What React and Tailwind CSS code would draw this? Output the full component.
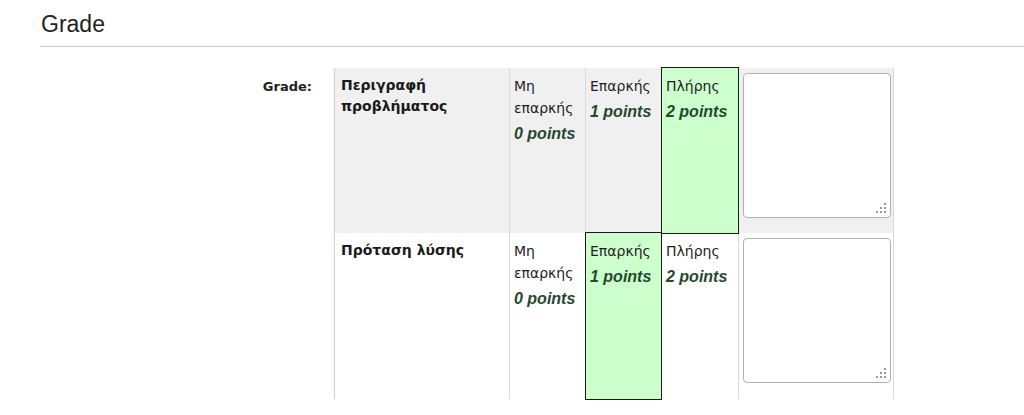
import React from "react";

const font = { fontFamily: '"Liberation Sans", Arial, sans-serif' };
const dv = { fontFamily: '"DejaVu Sans", Verdana, sans-serif' };

function Grip() {
  return (
    <svg className="absolute right-[3px] bottom-[3px]" width="12" height="12" viewBox="0 0 12 12">
      {[
        [9, 1],
        [5, 5],
        [9, 5],
        [1, 9],
        [5, 9],
        [9, 9],
      ].map(([x, y], i) => (
        <rect key={i} x={x} y={y} width="2" height="2" fill="#9a9a9a" />
      ))}
    </svg>
  );
}

function Level({ def, pts, selected, bg }) {
  return (
    <div
      className={
        "relative px-[4px] pt-[7px] " +
        (selected
          ? "bg-[#ccffcc] border border-[#1a1a1a] -ml-px -my-px z-10"
          : bg + " border-r border-[#d9d9d9]")
      }
    >
      <div className="text-[14px] leading-[22px] text-[#1e1e1e] whitespace-nowrap" style={dv}>{def}</div>
      <div className="text-[16px] leading-[22px] mt-[4px] italic font-bold text-[#23492f] whitespace-nowrap">{pts}</div>
    </div>
  );
}

function Remark({ bg }) {
  return (
    <div className={"pl-[4px] pr-[3px] pt-[5px] border-r border-[#d9d9d9] " + bg}>
      <div className="relative h-[145px] w-[148px] rounded-[4px] border border-[#b0b0b0] bg-white">
        <Grip />
      </div>
    </div>
  );
}

export default function App() {
  return (
    <div className="bg-white w-[1024px] h-[415px] overflow-hidden" style={font}>
      <div className="pl-[40px]">
        <h2 className="text-[23px] leading-[26px] text-[#222] pt-[11px] pb-[9px] pl-[1px] border-b border-[#c8c8c8]">
          Grade
        </h2>
        <div className="flex mt-[21px]">
          <div className="w-[294px] pr-[22px] pt-[9px] text-right text-[13px] font-bold text-[#222]" style={dv}>Grade:</div>
          <div className="grid grid-cols-[175px_76px_76px_77px_155px] border-l border-[#d0d0d0]">
            {/* Row 1 */}
            <div className="bg-[#f0f0f0] border-r border-[#d9d9d9] h-[165px] pl-[6px] pt-[7px] text-[14px] leading-[21px] font-bold text-[#1a1a1a]" style={dv}>
              Περιγραφή
              <br />
              προβλήματος
            </div>
            <Level def={<>Μη<br />επαρκής</>} pts="0 points" bg="bg-[#f0f0f0]" />
            <Level def="Επαρκής" pts="1 points" bg="bg-[#f0f0f0]" />
            <Level def="Πλήρης" pts="2 points" selected />
            <Remark bg="bg-[#f0f0f0]" />
            {/* Row 2 */}
            <div className="bg-white border-r border-[#d9d9d9] h-[166px] pl-[6px] pt-[7px] text-[14px] leading-[21px] font-bold text-[#1a1a1a]" style={dv}>
              Πρόταση λύσης
            </div>
            <Level def={<>Μη<br />επαρκής</>} pts="0 points" bg="bg-white" />
            <Level def="Επαρκής" pts="1 points" selected />
            <Level def="Πλήρης" pts="2 points" bg="bg-white" />
            <Remark bg="bg-white" />
          </div>
        </div>
      </div>
    </div>
  );
}
